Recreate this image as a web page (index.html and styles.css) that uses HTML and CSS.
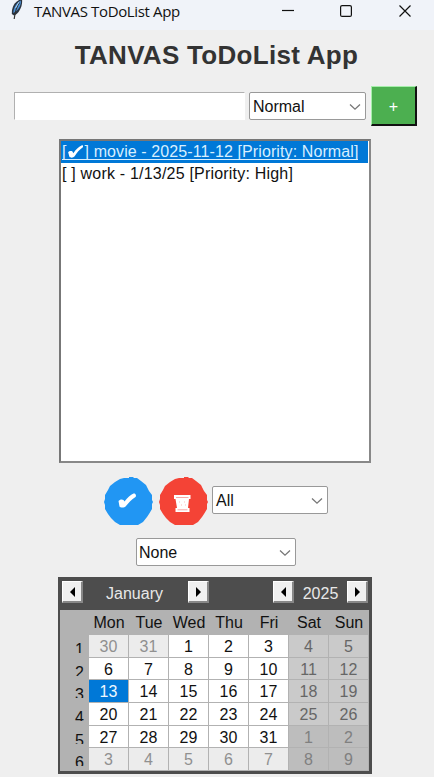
FILE: index.html
```html
<!DOCTYPE html>
<html lang="en">
<head>
<meta charset="utf-8">
<title>TANVAS ToDoList App</title>
<link rel="stylesheet" href="styles.css">
</head>
<body>
<header class="titlebar">
  <svg class="feather" width="16" height="22" viewBox="0 0 16 22"><path d="M13 0C8 1 4 5 3 11L2.800 15l2.200 1.500C10 14.500 14 7 13 0Z" fill="#2a3340"/><path d="M11.800 1.500C8 3.500 4.500 8 4.300 14 9.500 11.500 12.500 6 11.800 1.500Z" fill="#4c8fd4"/><path d="M10.500 3.500C8 7 6 13 5.200 20" fill="none" stroke="#333" stroke-width="1.200"/><path d="M10 3 6.500 9" stroke="#a9d0f5" stroke-width="1"/></svg>
  <span class="caption">TANVAS ToDoList App</span>
  <svg class="controls" width="132" height="16" viewBox="0 0 132 16" fill="none" stroke="#111" stroke-width="1.200"><path d="M0 7.500h12"/><rect x="58.600" y="2.600" width="10.800" height="10.800" rx="1.500"/><path d="m117.500 2.500 11 11m0-11-11 11"/></svg>
</header>
<main>
  <h1>TANVAS ToDoList App</h1>
  <div class="add-row">
    <div class="entry"></div>
    <div class="combo"><span>Normal</span><svg width="12" height="8" viewBox="0 0 12 8"><path d="m1 1.500 5 4.700 5-4.700"/></svg></div>
    <div class="add">+</div>
  </div>
  <div class="list">
    <div class="item selected"><span>[<svg class="check" width="15" height="13" viewBox="0 0 17 15"><path d="M0 8.500C1 7 3.500 6.500 5 7.500L6 9.500C9 5 12 2 15.500 .500 17.500 0 18 2 17 2.700 13 5.500 10 9 7.500 13 6 15 2.500 15 1.500 13.500Z"/></svg>] movie - 2025-11-12 [Priority: Normal]</span></div>
    <div class="item second"><span>[ ] work - 1/13/25 [Priority: High]</span></div>
  </div>
  <div class="actions">
    <svg class="round" width="49" height="49" viewBox="0 0 49 49"><path d="M20 1h5V0h4l1 1h3l4 3 5 4 3 6 3 4v5l1 2-1 2v5l-3 5-2 3-4 5-5 3H16l-5-3-4-4-3-4-3-5v-4l-1-3 1-3v-4l3-5 2-4 5-4 5-3Z" fill="#2196f3"/><path transform="translate(14.500 16)" d="M0 8C1 6.500 3.500 6 5 7L6 8.500C9 4.500 12 2 15 .500 17.500 0 18 3 17 4 13 6.500 10 10 7.500 13 6 15 2 15 1 13.500Z" fill="#fff"/></svg>
    <svg class="round" width="49" height="49" viewBox="0 0 49 49"><path d="M20 1h5V0h4l1 1h3l4 3 5 4 3 6 3 4v5l1 2-1 2v5l-3 5-2 3-4 5-5 3H16l-5-3-4-4-3-4-3-5v-4l-1-3 1-3v-4l3-5 2-4 5-4 5-3Z" fill="#f44336"/><path d="M15 18h16.500v4H30L29 31h1.500v4h-14v-4h1.500L16.500 22H15Z" fill="#fff"/><path d="M17 20.500h12.500M18.500 32.800h10" stroke="#f9a9a5" stroke-width="1"/><path d="M20 25h1m4 0h1m-4 3h1m3 0h1" stroke="#fbb" stroke-width="1"/></svg>
    <div class="combo filter"><span>All</span><svg width="12" height="8" viewBox="0 0 12 8"><path d="m1 1.500 5 4.700 5-4.700"/></svg></div>
  </div>
  <div class="combo repeat"><span>None</span><svg width="12" height="8" viewBox="0 0 12 8"><path d="m1 1.500 5 4.700 5-4.700"/></svg></div>
  <section class="calendar">
    <div class="cal-head">
      <div class="nav"><svg width="5" height="10" viewBox="0 0 5 10"><path d="M5 0v10L0 5Z"/></svg></div>
      <span class="month">January</span>
      <div class="nav"><svg width="5" height="10" viewBox="0 0 5 10"><path d="M0 0v10l5-5Z"/></svg></div>
      <div class="nav year-prev"><svg width="5" height="10" viewBox="0 0 5 10"><path d="M5 0v10L0 5Z"/></svg></div>
      <span class="year">2025</span>
      <div class="nav"><svg width="5" height="10" viewBox="0 0 5 10"><path d="M0 0v10l5-5Z"/></svg></div>
    </div>
    <div class="grid names"><i></i><b>Mon</b><b>Tue</b><b>Wed</b><b>Thu</b><b>Fri</b><b>Sat</b><b>Sun</b></div>
    <div class="grid days">
      <i><u>1</u></i><b class="o">30</b><b class="o">31</b><b>1</b><b>2</b><b>3</b><b class="w">4</b><b class="w">5</b>
      <i><u>2</u></i><b>6</b><b>7</b><b>8</b><b>9</b><b>10</b><b class="w">11</b><b class="w">12</b>
      <i><u>3</u></i><b class="s">13</b><b>14</b><b>15</b><b>16</b><b>17</b><b class="w">18</b><b class="w">19</b>
      <i><u>4</u></i><b>20</b><b>21</b><b>22</b><b>23</b><b>24</b><b class="w">25</b><b class="w">26</b>
      <i><u>5</u></i><b>27</b><b>28</b><b>29</b><b>30</b><b>31</b><b class="ow">1</b><b class="ow">2</b>
      <i><u>6</u></i><b class="o">3</b><b class="o">4</b><b class="o">5</b><b class="o">6</b><b class="o">7</b><b class="ow">8</b><b class="ow">9</b>
    </div>
  </section>
</main>
</body>
</html>
```
FILE: styles.css
```css
* { box-sizing: border-box; }
body { margin: 0; height: 777px; overflow: hidden; background: #efefef; color: #111; font: 16px/20px "Liberation Sans", Arial, sans-serif; }
svg { display: block; flex: none; }
.titlebar { height: 30px; background: #f0f3f9; display: flex; align-items: flex-start; padding-left: 9px; }
.feather { margin-top: -1px; }
.caption { margin: 1px 0 0 9px; font: 15px/20px "Open Sans", "Noto Sans", sans-serif; letter-spacing: -.36px; white-space: nowrap; }
.controls { margin: 3px 20px 0 auto; }
h1 { margin: 0; height: 56px; padding: 9px 1px 0 0; text-align: center; font-size: 26px; line-height: 32px; color: #333; letter-spacing: .3px; white-space: nowrap; }
.add-row { display: flex; align-items: center; height: 40px; padding-left: 14px; }
.entry { width: 231px; height: 28px; background: #fff; border: 1px solid #fff; border-top-color: #b0b0b0; border-left-color: #b0b0b0; }
.combo { width: 117px; height: 28px; margin-left: 4px; padding: 1px 4px 0 3px; background: #fff; border: 1px solid #999; border-radius: 2px; display: flex; align-items: center; justify-content: space-between; }
.combo svg { fill: none; stroke: #777; stroke-width: 1.3; margin-top: 1px; }
.add { width: 46px; height: 40px; margin-left: 5px; background: #4caf50; border: 2px solid #111; border-top: 1px solid #a5efaa; border-left: 1px solid #a5efaa; color: #fff; text-align: center; line-height: 39px; }
.list { width: 312px; height: 324px; margin: 13px 0 0 59px; background: #fff; border: 2px solid #777; border-right-color: #888; border-bottom-color: #888; padding-right: 1px; }
.item { height: 22px; line-height: 22px; padding-left: 1px; white-space: nowrap; letter-spacing: .1px; }
.item span { display: inline-block; height: 19px; line-height: 22px; vertical-align: top; }
.second { letter-spacing: .2px; }
.selected { background: #0078d7; color: #d7efff; }
.selected span { border-bottom: 1px solid #d7efff; }
.check { display: inline-block; fill: #fff; margin: 0 2px 0 1px; vertical-align: -1px; }
.actions { display: flex; height: 49px; margin: 14px 0 0 104px; }
.round + .round { margin-left: 6px; }
.filter { width: 116px; margin-top: 9px; }
.repeat { width: 160px; margin: 12px 0 0 136px; padding-left: 2px; }
.calendar { width: 314px; height: 197px; margin: 11px 0 0 58px; border: 3px solid #4d4d4d; border-left-width: 2px; background: #b2b2b2; }
.cal-head { height: 30px; background: #4d4d4d; display: flex; color: #e8e8e8; padding: 1px 0 0 2px; }
.nav { width: 21px; height: 22px; background: #f0f0f0; border: 1px solid #fff; border-right: 2px solid #888; border-bottom: 2px solid #888; display: flex; align-items: center; justify-content: center; }
.month { width: 105px; text-align: center; line-height: 26px; padding-right: 2px; }
.year-prev { margin-left: 64px; }
.year { width: 53px; text-align: center; line-height: 26px; }
.grid { display: grid; grid-template-columns: 29px repeat(7, 40px); }
.grid b { font-weight: 400; text-align: center; }
.names { height: 25px; line-height: 25px; }
.days { grid-template-rows: repeat(6, 22.67px); }
.days b { background: #fff; border-right: 1px solid #b2b2b2; border-bottom: 1px solid #b2b2b2; line-height: 24px; height: 100%; overflow: hidden; }
.days .o { background: #ececec; color: #909090; }
.days .w { background: #cacaca; color: #666; }
.days .ow { background: #bdbdbd; color: #808080; }
.days .s { background: #0078d7; color: #eef8ff; }
.days i { font-style: normal; padding: 8px 5px 0 0; text-align: right; }
.days u { display: block; height: 10px; line-height: 14px; text-decoration: none; overflow: hidden; }
```
